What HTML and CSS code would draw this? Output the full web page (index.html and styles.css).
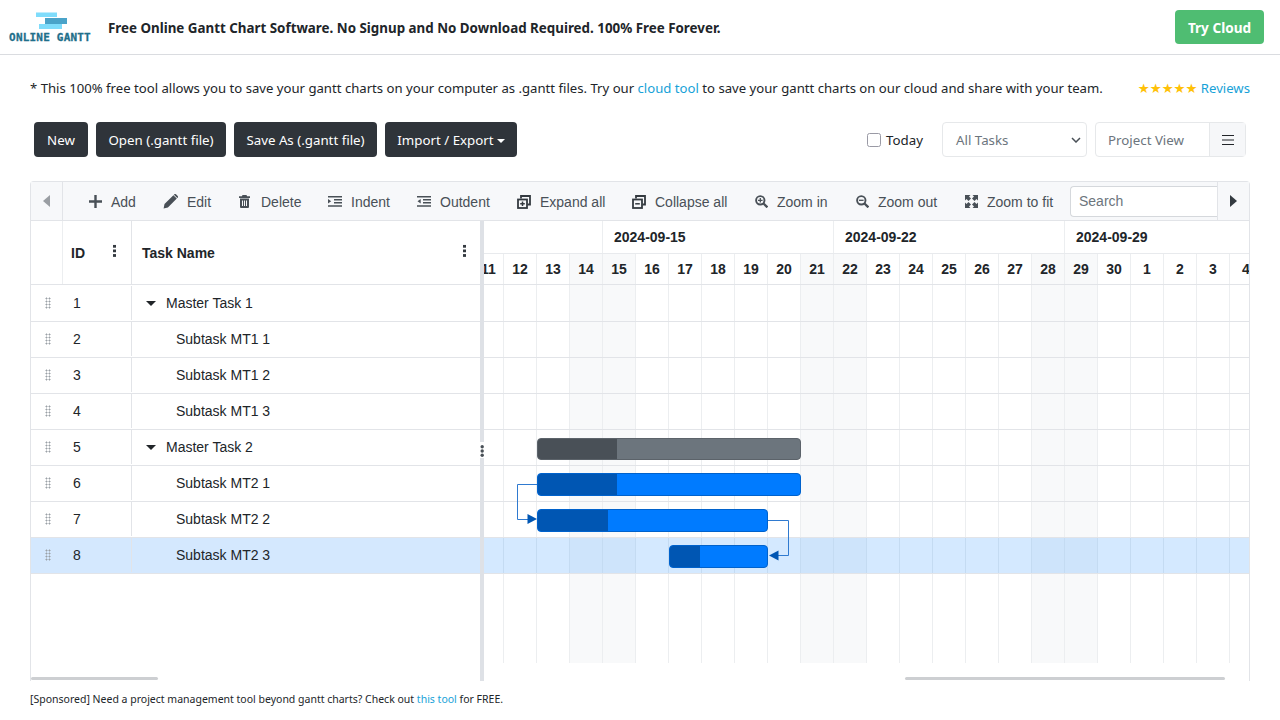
FILE: index.html
```html
<!DOCTYPE html>
<html lang="en">
<head>
    <meta charset="UTF-8">
    <meta name="viewport" content="width=device-width, initial-scale=1.0">
    <title>Online Gantt</title>
    <link rel="stylesheet" href="styles.css">
</head>
<body>
    <header class="topbar">
        <div class="logo">
            <svg class="logo-bars" width="34" height="20" viewBox="0 0 34 20">
                <rect x="0" y="2.500" width="21" height="4.500" fill="#7fdcfb"/>
                <rect x="9" y="8" width="22" height="6" fill="#4aa3c9"/>
                <rect x="3" y="14" width="23" height="5" fill="#7fdcfb"/>
            </svg>
            <span class="logo-text">ONLINE GANTT</span>
        </div>
        <h1 class="tagline">Free Online Gantt Chart Software. No Signup and No Download Required. 100% Free Forever.</h1>
        <a class="try-cloud">Try Cloud</a>
    </header>

    <main class="page">
        <div class="notice">
            <p>* This 100% free tool allows you to save your gantt charts on your computer as .gantt files. Try our <a>cloud tool</a> to save your gantt charts on our cloud and share with your team.</p>
            <p class="reviews"><span class="stars">★★★★★</span> <a>Reviews</a></p>
        </div>

        <div class="actions">
            <div class="file-btns">
                <button class="btn btn-new" type="button">New</button>
                <button class="btn btn-open" type="button">Open (.gantt file)</button>
                <button class="btn btn-save" type="button">Save As (.gantt file)</button>
                <button class="btn btn-import" type="button">Import / Export<i class="caret"></i></button>
            </div>
            <div class="view-controls">
                <label class="today"><i class="checkbox"></i>Today</label>
                <div class="select">All Tasks
                    <svg width="10" height="6" viewBox="0 0 10 6"><path d="M1 1l4 4 4-4" fill="none" stroke="#495057" stroke-width="1.5"/></svg>
                </div>
                <div class="view-group">
                    <span class="view-name">Project View</span>
                    <span class="view-menu"><svg width="12" height="10" viewBox="0 0 12 10"><path d="M0 .5h12M0 5h12M0 9.500h12" stroke="#212529" stroke-width="1"/></svg></span>
                </div>
            </div>
        </div>

        <section class="gantt">
            <div class="toolbar">
                <span class="tb-left"><svg width="7" height="12" viewBox="0 0 7 12"><path d="M7 0v12L0 6z" fill="#9a9ea3"/></svg></span>
                <div class="tb-items">
                    <span class="tb-item tb-add"><svg width="13" height="13" viewBox="0 0 13 13"><path d="M5.300 0h2.400v5.300H13v2.400H7.700V13H5.300V7.700H0V5.300h5.300z" fill="#495057"/></svg>Add</span>
                    <span class="tb-item tb-edit"><svg width="15" height="15" viewBox="0 0 15 15"><path d="M10.400 1.200l3.400 3.400-8.900 8.900L.6 14.400l.9-4.300zM11.300.3a1.200 1.200 0 0 1 1.700 0l1.700 1.700a1.200 1.200 0 0 1 0 1.700l-.4.4-3.400-3.400z" fill="#495057"/></svg>Edit</span>
                    <span class="tb-item tb-delete"><svg width="11" height="13" viewBox="0 0 11 13"><path d="M3.500 0h4l.6 1.300H11v1.700H0V1.300h2.900zM1 3.500h9V12a1 1 0 0 1-1 1H2a1 1 0 0 1-1-1zm2 2v5.500h1V5.500zm2 0v5.500h1V5.500zm2 0v5.500h1V5.500z" fill="#495057"/></svg>Delete</span>
                    <span class="tb-item tb-indent"><svg width="14" height="11" viewBox="0 0 14 11"><path d="M0 .7h14M6 3.800h8M6 6.800h8M0 10h14" stroke="#495057" stroke-width="1.500"/><path d="M0 3l3.200 2.300L0 7.600z" fill="#495057"/></svg>Indent</span>
                    <span class="tb-item tb-outdent"><svg width="14" height="11" viewBox="0 0 14 11"><path d="M0 .7h14M6 3.800h8M6 6.800h8M0 10h14" stroke="#495057" stroke-width="1.500"/><path d="M3.700 3L.5 5.300l3.200 2.300z" fill="#495057"/></svg>Outdent</span>
                    <span class="tb-item tb-expand"><svg width="14" height="14" viewBox="0 0 14 14"><path d="M4 3.500V1h9v8.500h-2.500" fill="none" stroke="#343a40" stroke-width="1.800"/><rect x="1" y="4.500" width="9" height="8.500" fill="none" stroke="#343a40" stroke-width="1.800"/><path d="M5.500 6.500v4.500M3.200 8.800h4.600" stroke="#343a40" stroke-width="1.500"/></svg>Expand all</span>
                    <span class="tb-item tb-collapse"><svg width="14" height="14" viewBox="0 0 14 14"><path d="M4 3.500V1h9v8.500h-2.500" fill="none" stroke="#343a40" stroke-width="1.800"/><rect x="1" y="4.500" width="9" height="8.500" fill="none" stroke="#343a40" stroke-width="1.800"/><path d="M3.200 8.800h4.600" stroke="#343a40" stroke-width="1.500"/></svg>Collapse all</span>
                    <span class="tb-item tb-zoomin"><svg width="13" height="13" viewBox="0 0 13 13"><circle cx="5.300" cy="5.300" r="4.200" fill="none" stroke="#495057" stroke-width="1.900"/><path d="M8.500 8.500L12.400 12.400" stroke="#495057" stroke-width="2.300"/><path d="M5.300 3v4.600M3 5.300h4.600" stroke="#495057" stroke-width="1.300"/></svg>Zoom in</span>
                    <span class="tb-item tb-zoomout"><svg width="13" height="13" viewBox="0 0 13 13"><circle cx="5.300" cy="5.300" r="4.200" fill="none" stroke="#495057" stroke-width="1.900"/><path d="M8.500 8.500L12.400 12.400" stroke="#495057" stroke-width="2.300"/><path d="M3 5.300h4.600" stroke="#495057" stroke-width="1.300"/></svg>Zoom out</span>
                    <span class="tb-item tb-fit"><svg width="13" height="13" viewBox="0 0 13 13"><path d="M0 0h5.500L4 1.500 6 3.500 3.500 6 1.500 4 0 5.500zM13 0v5.500L11.500 4l-2 2L7 3.500l2-2L7.500 0zM0 13V7.500L1.500 9l2-2L6 9.500l-2 2L5.500 13zM13 13H7.500L9 11.500l-2-2L9.500 7l2 2L13 7.500z" fill="#495057"/></svg>Zoom to fit</span>
                </div>
                <input class="tb-search" type="text" placeholder="Search">
                <span class="tb-right"><svg width="7" height="12" viewBox="0 0 7 12"><path d="M0 0v12l7-6z" fill="#343a40"/></svg></span>
            </div>

            <div class="panes">
                <div class="grid-pane">
                    <div class="grid-head">
                        <div class="col-drag"></div>
                        <div class="col-id">ID<i class="dots"></i></div>
                        <div class="col-name">Task Name<i class="dots"></i></div>
                    </div>
                    <div class="row"><div class="col-drag"><i class="grip"></i></div><div class="col-id">1</div><div class="col-name"><i class="arrow"></i>Master Task 1</div></div>
                    <div class="row"><div class="col-drag"><i class="grip"></i></div><div class="col-id">2</div><div class="col-name sub">Subtask MT1 1</div></div>
                    <div class="row"><div class="col-drag"><i class="grip"></i></div><div class="col-id">3</div><div class="col-name sub">Subtask MT1 2</div></div>
                    <div class="row"><div class="col-drag"><i class="grip"></i></div><div class="col-id">4</div><div class="col-name sub">Subtask MT1 3</div></div>
                    <div class="row"><div class="col-drag"><i class="grip"></i></div><div class="col-id">5</div><div class="col-name"><i class="arrow"></i>Master Task 2</div></div>
                    <div class="row"><div class="col-drag"><i class="grip"></i></div><div class="col-id">6</div><div class="col-name sub">Subtask MT2 1</div></div>
                    <div class="row"><div class="col-drag"><i class="grip"></i></div><div class="col-id">7</div><div class="col-name sub">Subtask MT2 2</div></div>
                    <div class="row selected"><div class="col-drag"><i class="grip"></i></div><div class="col-id">8</div><div class="col-name sub">Subtask MT2 3</div></div>
                    <div class="scroll-track"><div class="scroll-thumb left-thumb"></div></div>
                </div>

                <div class="splitter">
                    <svg class="split-dots" width="4" height="16" viewBox="0 0 4 16">
                        <circle cx="2.200" cy="4.700" r="1.700" fill="#495057"/>
                        <circle cx="2.200" cy="9" r="1.700" fill="#495057"/>
                        <circle cx="2.200" cy="13.300" r="1.700" fill="#495057"/>
                    </svg>
                </div>

                <div class="chart-pane">
                    <div class="weeks">
                        <div class="week stub"></div>
                        <div class="week">2024-09-15</div>
                        <div class="week">2024-09-22</div>
                        <div class="week">2024-09-29</div>
                    </div>
                    <div class="days">
                        <div class="day cut">11</div><div class="day">12</div><div class="day">13</div><div class="day off">14</div>
                        <div class="day off">15</div><div class="day">16</div><div class="day">17</div><div class="day">18</div><div class="day">19</div><div class="day">20</div><div class="day off">21</div>
                        <div class="day off">22</div><div class="day">23</div><div class="day">24</div><div class="day">25</div><div class="day">26</div><div class="day">27</div><div class="day off">28</div>
                        <div class="day off">29</div><div class="day">30</div><div class="day">1</div><div class="day">2</div><div class="day">3</div><div class="day">4</div>
                    </div>
                    <div class="chart-body">
                        <div class="cols">
                            <i class="cut"></i><i></i><i></i><i class="off"></i>
                            <i class="off"></i><i></i><i></i><i></i><i></i><i></i><i class="off"></i>
                            <i class="off"></i><i></i><i></i><i></i><i></i><i></i><i class="off"></i>
                            <i class="off"></i><i></i><i></i><i></i><i></i><i></i>
                        </div>
                        <div class="chart-row"></div><div class="chart-row"></div><div class="chart-row"></div><div class="chart-row"></div>
                        <div class="chart-row"></div><div class="chart-row"></div><div class="chart-row"></div><div class="chart-row selected"></div>

                        <div class="bar master bar-5"><div class="done"></div></div>
                        <div class="bar bar-6"><div class="done"></div></div>
                        <div class="bar bar-7"><div class="done"></div></div>
                        <div class="bar bar-8"><div class="done"></div></div>

                        <svg class="links" width="767" height="378" viewBox="0 0 767 378">
                            <path d="M53 199.500H33.500V234.500H45" fill="none" stroke="#2f7ad0" stroke-width="1"/>
                            <path d="M43.500 229v10l9.500-5z" fill="#0056b3"/>
                            <path d="M284 235.500H304.500V270.500H293" fill="none" stroke="#2f7ad0" stroke-width="1"/>
                            <path d="M294.500 265.500v10l-9.500-5z" fill="#0056b3"/>
                        </svg>
                    </div>
                    <div class="scroll-track"><div class="scroll-thumb right-thumb"></div></div>
                </div>
            </div>
        </section>

        <p class="sponsored">[Sponsored] Need a project management tool beyond gantt charts? Check out <a>this tool</a> for FREE.</p>
    </main>
</body>
</html>
```
FILE: styles.css
```css
* {
    box-sizing: border-box;
}
body {
    margin: 0;
    height: 720px;
    overflow: hidden;
    background: #fff;
    color: #212529;
    font-family: "Noto Sans", "Open Sans", sans-serif;
    font-size: 13.3px;
}
a {
    color: #17a2d8;
}
p {
    margin: 0;
}

/* top bar */
.topbar {
    display: flex;
    align-items: center;
    height: 55px;
    padding: 0 16px 0 9px;
    border-bottom: 1px solid #dadce0;
}
.logo {
    display: flex;
    flex-direction: column;
    align-items: center;
    width: 82px;
}
.logo-bars {
    display: block;
    margin-bottom: 2px;
    margin-left: 6px;
}
.logo-text {
    font-family: "DejaVu Sans Mono", monospace;
    font-size: 11px;
    font-weight: 700;
    line-height: 12px;
    letter-spacing: .2px;
    color: #1f6f8b;
    -webkit-text-stroke: .3px #1f6f8b;
    white-space: nowrap;
}
.tagline {
    flex: 1;
    margin: 2px 0 0 17px;
    font-size: 13.37px;
    font-weight: 700;
}
.try-cloud {
    display: block;
    width: 89px;
    height: 34px;
    background: #4fbd72;
    border-radius: 4px;
    color: #fff;
    font-size: 13.6px;
    font-weight: 700;
    line-height: 35px;
    text-align: center;
}

.page {
    padding: 0 30px;
}
.notice {
    display: flex;
    justify-content: space-between;
    align-items: center;
    height: 20px;
    margin-top: 23px;
    font-size: 13.15px;
    white-space: nowrap;
}
.stars {
    color: #ffc107;
    font-family: "DejaVu Sans", sans-serif;
    font-size: 13.3px;
}

/* action row */
.actions {
    display: flex;
    justify-content: space-between;
    align-items: center;
    height: 35px;
    margin-top: 24px;
    padding: 0 4px;
}
.file-btns {
    display: flex;
    gap: 8px;
}
.btn {
    height: 35px;
    padding: 0;
    background: #2f343a;
    border: 0;
    border-radius: 4px;
    color: #fff;
    font-family: inherit;
    font-size: 13.3px;
}
.btn-new { width: 54px; }
.btn-open { width: 130px; }
.btn-save { width: 143px; }
.btn-import { width: 132px; }
.caret {
    display: inline-block;
    margin-left: 3px;
    vertical-align: 2px;
    border-top: 4px solid #fff;
    border-left: 4px solid transparent;
    border-right: 4px solid transparent;
}
.view-controls {
    display: flex;
    align-items: center;
}
.today {
    display: flex;
    align-items: center;
    margin-right: 19px;
}
.checkbox {
    width: 14px;
    height: 14px;
    margin-right: 5px;
    border: 1.5px solid #9a9aa5;
    border-radius: 2.5px;
}
.select {
    display: flex;
    justify-content: space-between;
    align-items: center;
    width: 145px;
    height: 35px;
    margin-right: 8px;
    padding: 0 5px 0 13px;
    border: 1px solid #e6e8ea;
    border-radius: 4px;
    color: #6c757d;
}
.view-group {
    display: flex;
    width: 151px;
    height: 35px;
    border: 1px solid #e6e8ea;
    border-radius: 4px;
    line-height: 34px;
}
.view-name {
    flex: 1;
    padding-left: 12px;
    color: #6c757d;
}
.view-menu {
    display: flex;
    align-items: center;
    justify-content: center;
    width: 36px;
    background: #f6f7f9;
    border-left: 1px solid #e6e8ea;
}

/* gantt */
.gantt {
    height: 500px;
    margin-top: 24px;
    border: 1px solid #e2e4e8;
    border-bottom: 0;
    border-radius: 4px 4px 0 0;
    font-family: "Liberation Sans", Arial, sans-serif;
    font-size: 14px;
}
.toolbar {
    display: flex;
    height: 39px;
    background: #f7f8fa;
    border-bottom: 1px solid #e2e4e8;
    color: #495057;
}
.tb-left {
    display: flex;
    align-items: center;
    justify-content: center;
    width: 32px;
    border-right: 1px solid #e2e4e8;
}
.tb-items {
    flex: 1;
    position: relative;
}
.tb-item {
    position: absolute;
    top: 0;
    display: flex;
    align-items: center;
    height: 39px;
    white-space: nowrap;
}
.tb-item svg {
    margin-right: 9px;
}
.tb-add { left: 26px; }
.tb-edit { left: 100px; }
.tb-delete { left: 176px; }
.tb-delete svg { margin-right: 11px; }
.tb-indent { left: 265px; }
.tb-outdent { left: 354px; }
.tb-expand { left: 454px; }
.tb-collapse { left: 569px; }
.tb-zoomin { left: 692px; }
.tb-zoomout { left: 793px; }
.tb-fit { left: 902px; }
.tb-search {
    width: 147px;
    height: 31px;
    margin-top: 4px;
    padding: 0 8px 2px;
    border: 1px solid #d5d8dc;
    border-right: 0;
    border-radius: 4px 0 0 4px;
    font-family: inherit;
    font-size: 14px;
}
.tb-search::placeholder {
    color: #6c757d;
}
.tb-right {
    display: flex;
    align-items: center;
    justify-content: center;
    width: 32px;
    background: #f7f8fa;
    border-left: 1px solid #e2e4e8;
}
.panes {
    display: flex;
    height: 460px;
}
.grid-pane {
    position: relative;
    width: 449px;
}
.grid-head,
.row {
    display: flex;
    border-bottom: 1px solid #e2e4e8;
}
.grid-head {
    height: 64px;
    margin-bottom: 1px;
    font-weight: 700;
}
.row {
    height: 36px;
    padding-bottom: 1px;
}
.row.selected {
    background: #d4e8fe;
}
.col-drag {
    display: flex;
    align-items: center;
    justify-content: center;
    width: 31px;
}
.col-id {
    position: relative;
    display: flex;
    align-items: center;
    width: 70px;
    padding-left: 8px;
    border-left: 1px solid #eceef0;
    border-right: 1px solid #e2e4e8;
}
.row .col-id {
    border-left: 0;
    padding-left: 11px;
}
.col-name {
    position: relative;
    display: flex;
    align-items: center;
    flex: 1;
    padding-left: 10px;
}
.col-name.sub {
    padding-left: 44px;
}
.grip {
    width: 6px;
    height: 12px;
    margin-left: 3px;
    background-image: radial-gradient(circle, #9aa0a6 0.9px, transparent 1.1px);
    background-size: 3px 3px;
}
.arrow {
    width: 0;
    height: 0;
    margin: 0 10px 0 4px;
    border-top: 5px solid #212529;
    border-left: 5.5px solid transparent;
    border-right: 5.5px solid transparent;
}
.dots {
    position: absolute;
    top: 23px;
    right: 15px;
    width: 3px;
    height: 14px;
    background-image: radial-gradient(circle, #343a40 1.5px, transparent 1.7px);
    background-size: 3px 4.6px;
}
.col-name .dots {
    right: 14px;
}
.splitter {
    position: relative;
    width: 4px;
    background: #dee1e6;
}
.split-dots {
    position: absolute;
    top: 221px;
    left: 0;
    background: #fff;
}
.chart-pane {
    position: relative;
    flex: 1;
    overflow: hidden;
}
.weeks,
.days {
    display: flex;
    font-weight: 700;
    white-space: nowrap;
}
.weeks {
    height: 33px;
    border-bottom: 1px solid #e8eaed;
}
.days {
    height: 31px;
    border-bottom: 1px solid #e2e4e8;
}
.week {
    flex: none;
    width: 231px;
    padding-top: 8px;
    padding-left: 11px;
    border-left: 1px solid #eceef0;
}
.week.stub {
    width: 118px;
    padding: 0;
    border-left: 0;
}
.day {
    flex: none;
    width: 33px;
    padding-top: 7px;
    border-right: 1px solid #eceef0;
    text-align: center;
}
.day.cut {
    width: 20px;
    text-indent: -3px;
    text-align: left;
    overflow: hidden;
}
.off {
    background: #f8f9fa;
}
.chart-body {
    position: relative;
    height: 378px;
    padding-top: 1px;
}
.cols {
    position: absolute;
    inset: 0;
    display: flex;
}
.cols i {
    flex: none;
    width: 33px;
    border-right: 1px solid #eceef0;
}
.cols i.cut {
    width: 20px;
}
.chart-row {
    position: relative;
    height: 36px;
    border-bottom: 1px solid #e2e4e8;
}
.chart-row.selected {
    background: rgba(0, 123, 255, .17);
}
.bar {
    position: absolute;
    height: 23px;
    overflow: hidden;
    background: #007bff;
    border: 1px solid #0062cc;
    border-radius: 4px;
}
.bar .done {
    height: 100%;
    background: #0056b3;
}
.bar.master {
    height: 22px;
    background: #6c757d;
    border-color: #5c636a;
}
.bar.master .done {
    background: #495057;
}
.bar-5 { left: 53px; top: 153px; width: 264px; }
.bar-6 { left: 53px; top: 188px; width: 264px; }
.bar-7 { left: 53px; top: 224px; width: 231px; }
.bar-8 { left: 185px; top: 260px; width: 99px; }
.bar-5 .done,
.bar-6 .done { width: 79px; }
.bar-7 .done { width: 70px; }
.bar-8 .done { width: 30px; }
.links {
    position: absolute;
    top: 0;
    left: 0;
}
.scroll-track {
    position: absolute;
    right: 0;
    bottom: 0;
    left: 0;
    height: 4px;
}
.scroll-thumb {
    position: absolute;
    height: 3px;
    background: #cdcfd2;
    border-radius: 2px;
}
.left-thumb { left: 0; width: 127px; }
.right-thumb { left: 421px; width: 320px; }

.sponsored {
    margin-top: 11px;
    font-family: "Noto Sans", sans-serif;
    font-size: 10.5px;
    white-space: nowrap;
}
```
